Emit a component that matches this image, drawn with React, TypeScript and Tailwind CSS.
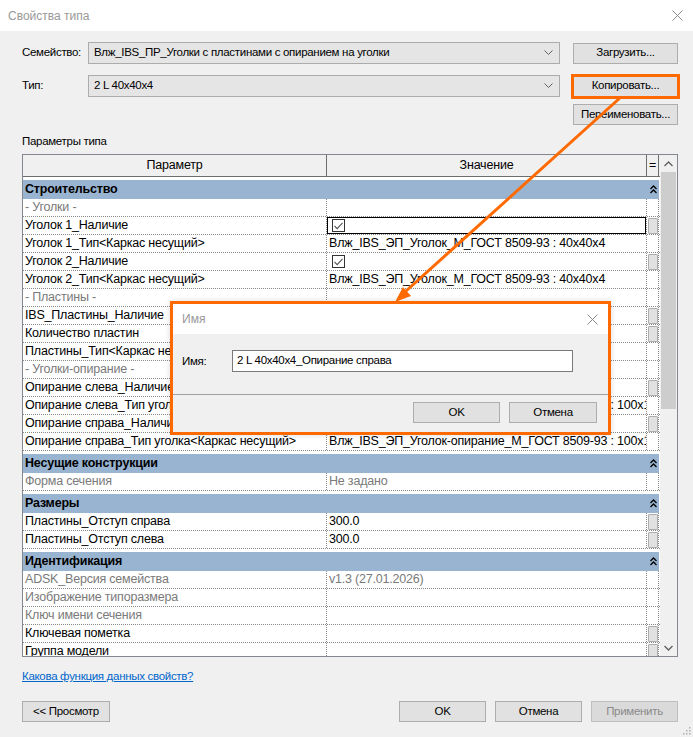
import React from 'react';

type Row =
  | { kind: 'group'; name: string }
  | {
      kind: 'row';
      name: string;
      value?: string;
      gray?: boolean;
      valueGray?: boolean;
      check?: boolean;
      btn?: boolean;
      selected?: boolean;
    };

const ugolok40 = 'Влж_IBS_ЭП_Уголок_М_ГОСТ 8509-93 : 40x40x4';
const opiranie = 'Влж_IBS_ЭП_Уголок-опирание_М_ГОСТ 8509-93 : 100x100';

const rows: Row[] = [
  { kind: 'group', name: 'Строительство' },
  { kind: 'row', name: '- Уголки -', gray: true },
  { kind: 'row', name: 'Уголок 1_Наличие', check: true, btn: true, selected: true },
  { kind: 'row', name: 'Уголок 1_Тип<Каркас несущий>', value: ugolok40 },
  { kind: 'row', name: 'Уголок 2_Наличие', check: true, btn: true },
  { kind: 'row', name: 'Уголок 2_Тип<Каркас несущий>', value: ugolok40 },
  { kind: 'row', name: '- Пластины -', gray: true },
  { kind: 'row', name: 'IBS_Пластины_Наличие', check: true, btn: true },
  { kind: 'row', name: 'Количество пластин', value: '2', btn: true },
  { kind: 'row', name: 'Пластины_Тип<Каркас несущий>', value: 'Влж_IBS_ЭП_Пластина_М : 100x6' },
  { kind: 'row', name: '- Уголки-опирание -', gray: true },
  { kind: 'row', name: 'Опирание слева_Наличие', check: true, btn: true },
  { kind: 'row', name: 'Опирание слева_Тип уголка<Каркас несущий>', value: opiranie },
  { kind: 'row', name: 'Опирание справа_Наличие', check: true, btn: true },
  { kind: 'row', name: 'Опирание справа_Тип уголка<Каркас несущий>', value: opiranie },
  { kind: 'group', name: 'Несущие конструкции' },
  { kind: 'row', name: 'Форма сечения', gray: true, value: 'Не задано', valueGray: true },
  { kind: 'group', name: 'Размеры' },
  { kind: 'row', name: 'Пластины_Отступ справа', value: '300.0', btn: true },
  { kind: 'row', name: 'Пластины_Отступ слева', value: '300.0', btn: true },
  { kind: 'group', name: 'Идентификация' },
  { kind: 'row', name: 'ADSK_Версия семейства', gray: true, value: 'v1.3 (27.01.2026)', valueGray: true },
  { kind: 'row', name: 'Изображение типоразмера', gray: true },
  { kind: 'row', name: 'Ключ имени сечения', gray: true },
  { kind: 'row', name: 'Ключевая пометка', btn: true },
  { kind: 'row', name: 'Группа модели', btn: true },
];

function Btn({
  children,
  className = '',
  disabled = false,
}: {
  children: React.ReactNode;
  className?: string;
  disabled?: boolean;
}) {
  return (
    <div
      className={`flex h-[21px] items-center justify-center border ${
        disabled
          ? 'border-[#bfbfbf] bg-[#dadada] text-[#8a8a8a]'
          : 'border-[#adadad] bg-[#e1e1e1] text-black'
      } ${className}`}
    >
      {children}
    </div>
  );
}

function Combo({ text }: { text: string }) {
  return (
    <div className="flex h-[22px] w-[472px] items-center justify-between border border-[#acacac] bg-[#e5e5e5] pl-[5px] pr-[6px]">
      <span>{text}</span>
      <svg width="9" height="6" viewBox="0 0 9 6">
        <polyline points="0.5,0.5 4.5,4.5 8.5,0.5" fill="none" stroke="#606060" strokeWidth="1" />
      </svg>
    </div>
  );
}

function Check() {
  return (
    <div className="ml-[3px] flex h-[13px] w-[13px] items-center justify-center border border-[#333333] bg-white">
      <svg width="9" height="8" viewBox="0 0 9 8">
        <polyline points="0.5,4 3.2,6.7 8.5,0.8" fill="none" stroke="#555555" strokeWidth="1.1" />
      </svg>
    </div>
  );
}

function CollapseIcon() {
  return (
    <svg width="7" height="9" viewBox="0 0 7 9">
      <polyline points="0.5,4 3.5,1 6.5,4" fill="none" stroke="#000" strokeWidth="1.3" />
      <polyline points="0.5,8 3.5,5 6.5,8" fill="none" stroke="#000" strokeWidth="1.3" />
    </svg>
  );
}

function TableRow({ row }: { row: Row }) {
  if (row.kind === 'group') {
    return (
      <div className="shrink-0 bg-white pt-[3px]">
        <div className="flex h-[19px] w-[636px] items-center bg-[#99b4d1] font-bold">
          <div className="w-[624px] pl-[2px]">{row.name}</div>
          <div className="flex w-[12px] justify-center">
            <CollapseIcon />
          </div>
        </div>
      </div>
    );
  }
  return (
    <div className="flex h-[18px] shrink-0 border-b border-dotted border-[#8a8a8a] leading-[17px]">
      <div
        className={`w-[304px] truncate border-r border-dotted border-[#8a8a8a] pl-[2px] ${
          row.gray ? 'text-[#7a7a7a]' : 'text-black'
        }`}
      >
        {row.name}
      </div>
      <div
        className={`relative flex w-[320px] items-center overflow-hidden whitespace-nowrap border-r border-dotted border-[#8a8a8a] pl-[2px] ${
          row.valueGray ? 'text-[#7a7a7a]' : 'text-black'
        }`}
      >
        {row.check ? <Check /> : row.value}
        {row.selected && <div className="absolute inset-0 border border-black" />}
      </div>
      <div className="flex w-[12px] items-center justify-center border-r border-dotted border-[#8a8a8a]">
        {row.btn && <div className="h-[16px] w-[10px] rounded-[1px] border border-[#adadad] bg-[#e1e1e1]" />}
      </div>
    </div>
  );
}

export default function App() {
  return (
    <div className="relative h-[737px] w-[693px] overflow-hidden bg-[#f0f0f0] font-['Liberation_Sans',Arial,sans-serif] text-[11.5px] tracking-[-0.3px] text-black">
      {/* title bar */}
      <div className="flex h-[31px] items-center justify-between bg-white pl-[8px] pr-[10px]">
        <span className="text-[12px] tracking-normal text-[#999999]">Свойства типа</span>
        <svg width="11" height="11" viewBox="0 0 11 11">
          <path d="M0.5 0.5 L10.5 10.5 M10.5 0.5 L0.5 10.5" stroke="#8a8a8a" strokeWidth="1" />
        </svg>
      </div>

      <div className="flex flex-col pl-[22px] pr-[15px]">
        <div className="mt-[11px] flex h-[22px] items-center">
          <span className="w-[66px]">Семейство:</span>
          <Combo text="Влж_IBS_ПР_Уголки с пластинами с опиранием на уголки" />
          <Btn className="ml-[13px] w-[105px]">Загрузить...</Btn>
        </div>
        <div className="mt-[11px] flex h-[22px] items-center">
          <span className="w-[66px]">Тип:</span>
          <Combo text="2 L 40x40x4" />
          <div className="relative ml-[13px]">
            <Btn className="w-[105px]">Копировать...</Btn>
            <div className="absolute -inset-[2px] border-[3px] border-[#ff6a00]" />
          </div>
        </div>
        <div className="mt-[7px] flex justify-end">
          <Btn className="w-[105px]">Переименовать...</Btn>
        </div>
        <div className="mt-[8px] leading-[16px]">Параметры типа</div>

        {/* property grid */}
        <div className="mt-[5px] flex h-[503px] w-[656px] border border-[#828790] bg-white text-[12.5px] tracking-[-0.2px]">
          <div className="flex w-[637px] flex-col overflow-hidden">
            <div className="flex h-[22px] shrink-0 border-b border-[#6d6d6d] bg-[#f0f0f0]">
              <div className="flex w-[304px] items-center justify-center border-r border-[#6d6d6d]">Параметр</div>
              <div className="flex w-[320px] items-center justify-center border-r border-[#6d6d6d]">Значение</div>
              <div className="flex w-[12px] items-center justify-center border-r border-[#6d6d6d]">=</div>
            </div>
            {rows.map((r, i) => (
              <TableRow key={i} row={r} />
            ))}
          </div>
          <div className="flex w-[17px] flex-col bg-[#f0f0f0]">
            <div className="flex h-[17px] items-center justify-center">
              <svg width="9" height="6" viewBox="0 0 9 6">
                <polyline points="0.5,5 4.5,1 8.5,5" fill="none" stroke="#606060" strokeWidth="1.3" />
              </svg>
            </div>
            <div className="mx-[1px] h-[237px] bg-[#cdcdcd]" />
            <div className="flex-1" />
            <div className="flex h-[17px] items-center justify-center">
              <svg width="9" height="6" viewBox="0 0 9 6">
                <polyline points="0.5,1 4.5,5 8.5,1" fill="none" stroke="#606060" strokeWidth="1.3" />
              </svg>
            </div>
          </div>
        </div>

        <div className="mt-[11px] leading-[16px]">
          <span className="text-[#0066cc] underline">Какова функция данных свойств?</span>
        </div>

        <div className="mt-[17px] flex items-center">
          <Btn className="w-[88px]">&lt;&lt; Просмотр</Btn>
          <div className="flex-1" />
          <div className="flex gap-[9px]">
            <Btn className="w-[87px]">OK</Btn>
            <Btn className="w-[87px]">Отмена</Btn>
            <Btn className="w-[87px]" disabled>
              Применить
            </Btn>
          </div>
        </div>
      </div>

      {/* resize grip */}
      <svg className="absolute bottom-[2px] right-[2px]" width="8" height="8" viewBox="0 0 8 8">
        <rect x="6" y="0" width="1.5" height="1.5" fill="#b0b0b0" />
        <rect x="3" y="3" width="1.5" height="1.5" fill="#b0b0b0" />
        <rect x="6" y="3" width="1.5" height="1.5" fill="#b0b0b0" />
        <rect x="0" y="6" width="1.5" height="1.5" fill="#b0b0b0" />
        <rect x="3" y="6" width="1.5" height="1.5" fill="#b0b0b0" />
        <rect x="6" y="6" width="1.5" height="1.5" fill="#b0b0b0" />
      </svg>

      {/* "Имя" dialog */}
      <div className="absolute left-[170px] top-[301px] flex h-[134px] w-[441px] flex-col border-[3px] border-[#ff6a00] bg-[#f0f0f0] shadow-[0_0_6px_rgba(0,0,0,0.15)]">
        <div className="flex h-[30px] items-center justify-between bg-white pl-[9px] pr-[10px]">
          <span className="text-[12px] tracking-normal text-[#999999]">Имя</span>
          <svg width="11" height="11" viewBox="0 0 11 11">
            <path d="M0.5 0.5 L10.5 10.5 M10.5 0.5 L0.5 10.5" stroke="#8a8a8a" strokeWidth="1" />
          </svg>
        </div>
        <div className="flex h-[60px] items-start pt-[16px]">
          <span className="w-[59px] pl-[9px] leading-[22px]">Имя:</span>
          <div className="flex h-[22px] w-[341px] items-center border border-[#7a7a7a] bg-white pl-[4px]">
            2 L 40x40x4_Опирание справа
          </div>
        </div>
        <div className="flex flex-1 justify-end gap-[9px] border-t border-[#a0a0a0] pr-[11px] pt-[7px]">
          <Btn className="w-[87px]">OK</Btn>
          <Btn className="w-[88px]">Отмена</Btn>
        </div>
      </div>

      {/* callout arrow */}
      <svg className="pointer-events-none absolute left-0 top-0" width="693" height="737" viewBox="0 0 693 737">
        <line x1="621" y1="97" x2="406" y2="291" stroke="#ff6a00" strokeWidth="3" />
        <polygon points="395,302 411,296 403,287" fill="#ff6a00" />
      </svg>
    </div>
  );
}
